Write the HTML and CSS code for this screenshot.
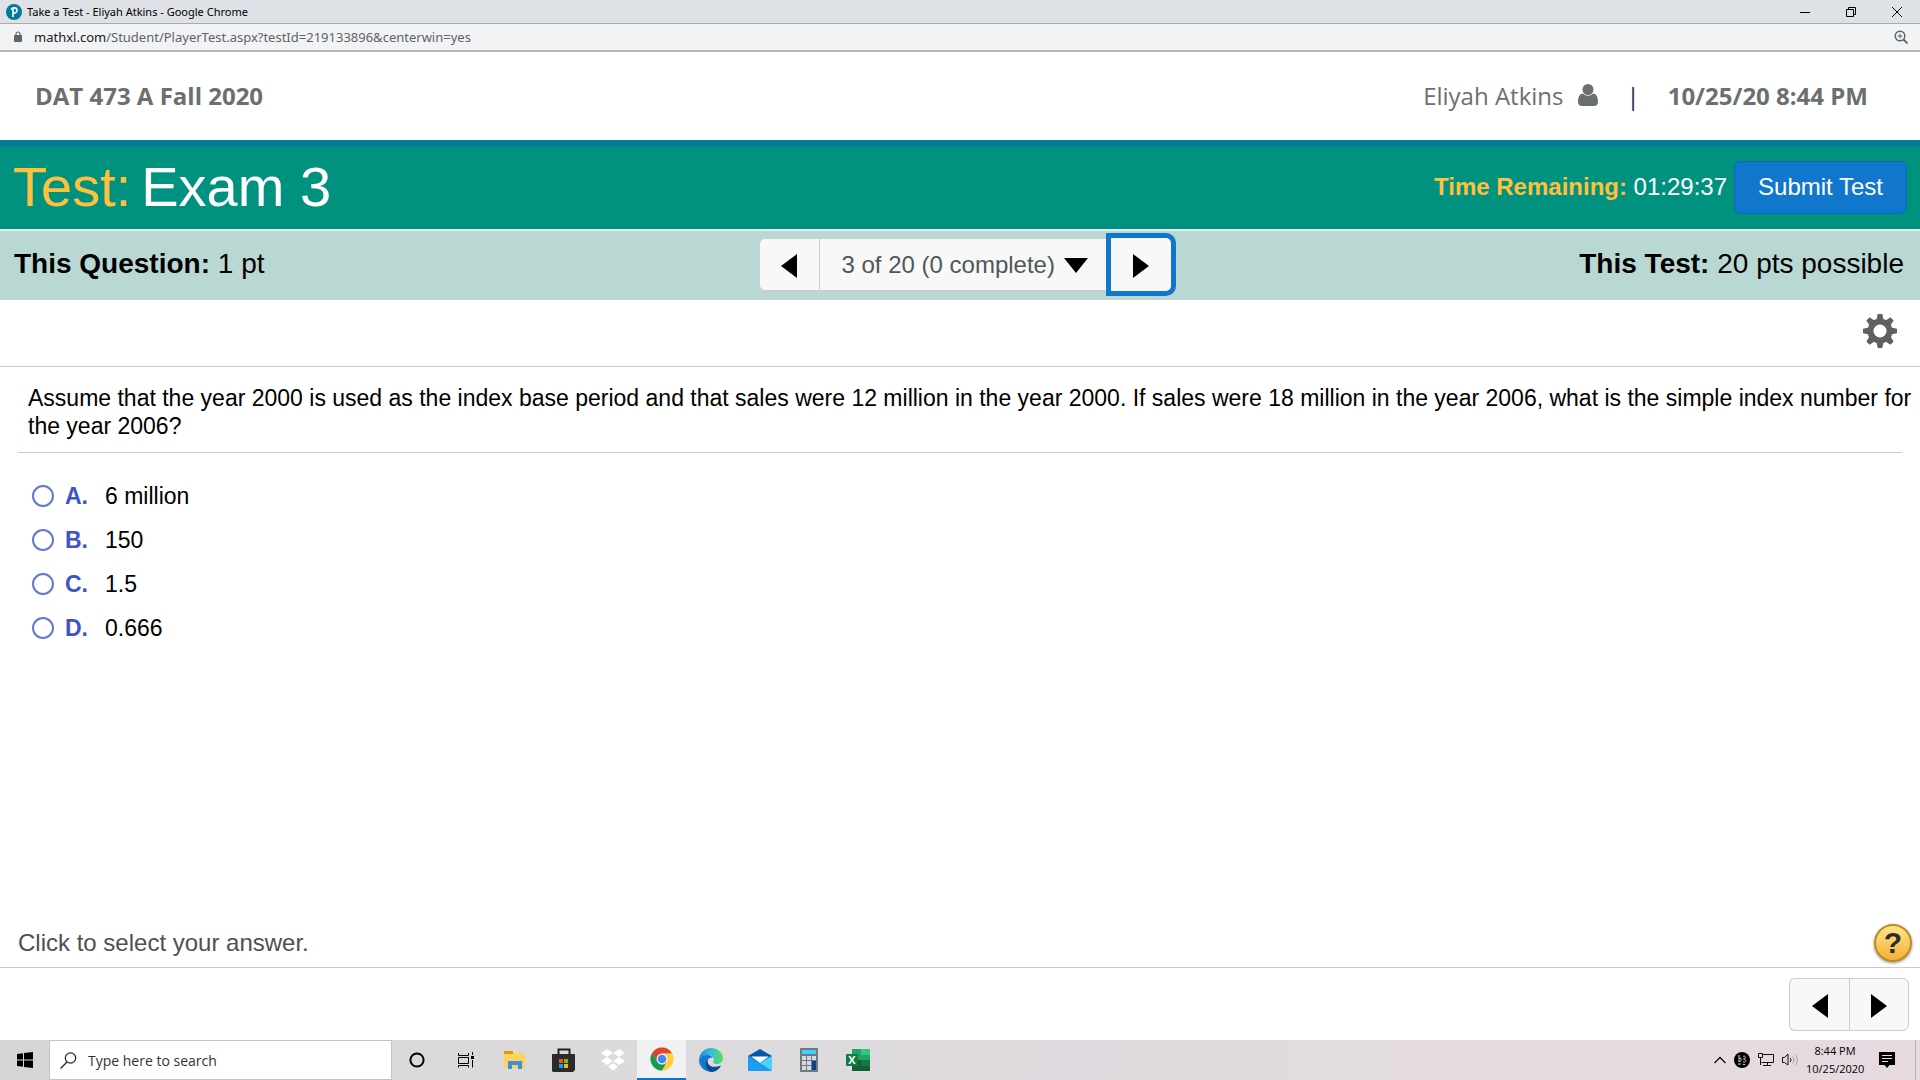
FILE: index.html
```html
<!DOCTYPE html>
<html lang="en">

<head>
    <meta charset="UTF-8">
    <meta name="viewport" content="width=device-width, initial-scale=1.0">
    <title>Take a Test - Eliyah Atkins</title>
    <link rel="stylesheet" href="styles.css">
</head>

<body>

    <!-- Window title -->
    <div class="titlebar">
        <svg class="favicon" width="16" height="16" viewBox="0 0 16 16">
            <circle cx="8" cy="8" r="8" fill="#047a9c" />
            <path d="M7 13V4.500M5 5.500C6 3.500 11 3 11 6.200C11 8.500 9 9.300 7.500 9" fill="none" stroke="#fff" stroke-width="1.600" />
        </svg>
        <span class="window-title">Take a Test - Eliyah Atkins - Google Chrome</span>
        <div class="window-buttons">
            <button aria-label="Minimize"><svg width="12" height="12"><path d="M1 6.500H11" stroke="#000" /></svg></button>
            <button aria-label="Restore"><svg width="12" height="12"><path d="M1.500 3.500H8.500V10.500H1.500ZM3.500 3.500V1.500H10.500V8.500H8.500" fill="none" stroke="#000" /></svg></button>
            <button aria-label="Close"><svg width="12" height="12"><path d="M1 1L11 11M11 1L1 11" stroke="#000" /></svg></button>
        </div>
    </div>

    <!-- Address bar -->
    <div class="addressbar">
        <svg width="8" height="12" viewBox="0 0 8 12">
            <rect y="4" width="8" height="7" rx="1" fill="#5f6368" />
            <path d="M2 5V3A2 2 0 0 1 6 3V5" fill="none" stroke="#5f6368" stroke-width="1.200" />
        </svg>
        <span class="url"><b>mathxl.com</b>/Student/PlayerTest.aspx?testId=219133896&amp;centerwin=yes</span>
        <button aria-label="Zoom">
            <svg width="14" height="14" viewBox="0 0 14 14" fill="none" stroke="#5f6368">
                <circle cx="6" cy="6" r="4.800" stroke-width="1.400" />
                <path d="M9.500 9.500L13.500 13.500" stroke-width="1.800" />
                <path d="M3.500 6H8.500M6 3.500V8.500" />
            </svg>
        </button>
    </div>

    <!-- Course header -->
    <header class="course">
        <span class="course-name">DAT 473 A Fall 2020</span>
        <span class="user">Eliyah Atkins</span>
        <svg class="user-icon" width="20" height="22" viewBox="0 0 20 22" fill="#6a7070">
            <circle cx="10" cy="5.500" r="5.500" />
            <path d="M5 9.500C1.500 10 0 13 0 18C0 20.500 1.500 22 4 22H16C18.500 22 20 20.500 20 18C20 13 18.500 10 15 9.500C12 12.500 8 12.500 5 9.500Z" />
        </svg>
        <span class="divider">|</span>
        <span class="date">10/25/20 8:44 PM</span>
    </header>

    <!-- Test title and timer -->
    <div class="test-bar">
        <h1><span class="gold">Test:</span> <span>Exam 3</span></h1>
        <div class="timer"><b class="gold">Time Remaining:</b> 01:29:37</div>
        <button class="submit">Submit Test</button>
    </div>

    <!-- Question bar -->
    <div class="question-bar">
        <div><b>This Question:</b> 1 pt</div>
        <div class="pager">
            <button class="prev" aria-label="Previous question"><svg width="16" height="24"><path d="M16 0V24L0 12Z" /></svg></button>
            <div class="jump">
                <select aria-label="Question">
                    <option>3 of 20 (0 complete)</option>
                </select>
                <svg width="24" height="15"><path d="M0 0H24L12 15Z" /></svg>
            </div>
            <button class="next selected" aria-label="Next question"><svg width="16" height="24"><path d="M0 0V24L16 12Z" /></svg></button>
        </div>
        <div class="points"><b>This Test:</b> 20 pts possible</div>
    </div>

    <div class="tools">
        <button aria-label="Settings">
            <svg width="34" height="34" viewBox="-17 -17 34 34">
                <g fill="#5f6062">
                    <circle r="12.500" />
                    <g id="teeth">
                        <path d="M-3.500 -11L-2.300 -17H2.300L3.500 -11ZM-3.500 11L-2.300 17H2.300L3.500 11Z" />
                        <path d="M-11 -3.500L-17 -2.300V2.300L-11 3.500ZM11 -3.500L17 -2.300V2.300L11 3.500Z" />
                    </g>
                    <use href="#teeth" transform="rotate(45)" />
                </g>
                <circle r="6.500" fill="#fff" />
            </svg>
        </button>
    </div>

    <!-- Question -->
    <main>
        <div class="question">
            <p>Assume that the year 2000 is used as the index base period and that sales were 12 million in the year 2000. If sales were 18 million in the year 2006, what is the simple index number for the year 2006?</p>
        </div>

        <div class="answers">
            <label><input type="radio" name="answer"><b>A.</b>6 million</label>
            <label><input type="radio" name="answer"><b>B.</b>150</label>
            <label><input type="radio" name="answer"><b>C.</b>1.5</label>
            <label><input type="radio" name="answer"><b>D.</b>0.666</label>
        </div>
    </main>

    <div class="hint">
        <span>Click to select your answer.</span>
        <button class="help" aria-label="Help">?</button>
    </div>

    <footer>
        <div class="pager">
            <button class="prev" aria-label="Previous"><svg width="16" height="24"><path d="M16 0V24L0 12Z" /></svg></button>
            <button class="next" aria-label="Next"><svg width="16" height="24"><path d="M0 0V24L16 12Z" /></svg></button>
        </div>
    </footer>

    <!-- Taskbar -->
    <div class="taskbar">
        <button aria-label="Start">
            <svg width="16" height="16"><path d="M0 2L6 1.200V7.500H0ZM7 1L16 0V7.500H7ZM0 8.500H6V14.800L0 14ZM7 8.500H16V16L7 15Z" /></svg>
        </button>
        <label class="search">
            <svg width="17" height="17" viewBox="0 0 17 17" fill="none" stroke="#222" stroke-width="1.200">
                <circle cx="10.500" cy="6" r="5.200" />
                <path d="M7 10L0.500 16.500" />
            </svg>
            <input type="text" aria-label="Search" placeholder="Type here to search">
        </label>
        <button aria-label="Cortana">
            <svg width="16" height="16"><circle cx="8" cy="8" r="6.600" fill="none" stroke="#000" stroke-width="2" /></svg>
        </button>
        <button aria-label="Task view">
            <svg width="16" height="16" fill="none" stroke="#000">
                <path d="M0.500 1V3.500H10.500V1M0.500 5.500H10.500V11.500H0.500ZM0.500 15.500V13.500H10.500V15.500M14.500 0V3M14.500 8V15.500" />
                <rect x="13" y="4" width="3" height="3" fill="#000" stroke="none" />
            </svg>
        </button>
        <button aria-label="File Explorer">
            <svg width="22" height="18">
                <path d="M0 0H8L10 2H21V17H0Z" fill="#ffd25e" />
                <path d="M0 0H9V3H0Z" fill="#dc9c10" />
                <path d="M4 10H18V18H14V14H8V18H4Z" fill="#3a93d8" />
            </svg>
        </button>
        <button aria-label="Microsoft Store">
            <svg width="24" height="24">
                <path d="M6.500 7V1.500H17.500V7" fill="none" stroke="#222" stroke-width="2" />
                <path d="M0 6H23V22L21 24H1L0 23Z" fill="#2b2b2b" />
                <path d="M7 11H11V15H7Z" fill="#f25022" />
                <path d="M12 11H16V15H12Z" fill="#7fba00" />
                <path d="M7 16H11V20H7Z" fill="#00a4ef" />
                <path d="M12 16H16V20H12Z" fill="#ffb900" />
            </svg>
        </button>
        <button aria-label="Dropbox">
            <svg width="24" height="22" fill="#fff">
                <path d="M6 0L12 4L6 8L0 4ZM18 0L24 4L18 8L12 4ZM6 8L12 12L6 16L0 12ZM18 8L24 12L18 16L12 12ZM12 14L17 17.500L12 21.500L7 17.500Z" />
            </svg>
        </button>
        <button class="running" aria-label="Google Chrome">
            <svg width="24" height="24" viewBox="-12 -12 24 24">
                <circle r="11.500" fill="#ffcd40" />
                <path d="M-9.960 -5.750A11.500 11.500 0 0 1 9.960 -5.750H0L-4.760 2.750Z" fill="#db4437" />
                <path d="M-9.960 -5.750L-4.760 2.750L0 5.500L4.760 2.750L0 11.500A11.500 11.500 0 0 1 -9.960 -5.750Z" fill="#0f9d58" />
                <circle r="5.500" fill="#f1f1f1" />
                <circle r="4.300" fill="#4285f4" />
            </svg>
        </button>
        <button aria-label="Microsoft Edge">
            <svg width="24" height="24" viewBox="0 0 24 24">
                <defs>
                    <linearGradient id="edge">
                        <stop offset="0" stop-color="#1b8fd9" />
                        <stop offset="0.5" stop-color="#2fc0de" />
                        <stop offset="1" stop-color="#62de4e" />
                    </linearGradient>
                </defs>
                <path d="M0 11C1 4 6 0 12 0C19 0 24 5 24 10C24 14 21 16 18 16C15 16 13.500 15 14.500 13C16 10 13 7 9 7C5 7 1 9 0 11Z" fill="url(#edge)" />
                <path d="M0 12C1 8 5 7 8 7C11 7 13 8 14 10C10 9 8 12 8 15C8 20 12 23 16 23C8 26 0 20 0 12Z" fill="#1578cf" />
                <path d="M9 11C7 17 13 21 22 17.500C20 22 16 24 12 24C6 21 5 14 9 11Z" fill="#114a92" />
            </svg>
        </button>
        <button aria-label="Mail">
            <svg width="24" height="22">
                <path d="M0 7L12 0L24 7L12 15Z" fill="#0358a7" />
                <path d="M3 7.500H21L12 14Z" fill="#fff" />
                <path d="M0 7L12 14L24 7V22H0Z" fill="#1a9df0" />
                <path d="M24 7V22L12 14Z" fill="#50d0fa" />
            </svg>
        </button>
        <button aria-label="Calculator">
            <svg width="18" height="24">
                <rect width="18" height="24" rx="1" fill="#6e7984" />
                <path d="M2 2H16V6H2Z" fill="#3ad3ff" />
                <path d="M2 8H6V12H2ZM7 8H11V12H7ZM12 8H16V12H12ZM2 13H6V17H2ZM7 13H11V17H7ZM2 18H6V22H2ZM7 18H11V22H7Z" fill="#d3dae0" />
                <path d="M12 13H16V22H12Z" fill="#10408c" />
            </svg>
        </button>
        <button aria-label="Excel">
            <svg width="24" height="22">
                <path d="M6 0H24V22H6Z" fill="#185c37" />
                <path d="M6 0H15V11H6Z" fill="#21a366" />
                <path d="M15 0H24V6H15Z" fill="#33c481" />
                <path d="M15 6H24V11H15Z" fill="#21a366" />
                <path d="M15 11H24V17H15Z" fill="#107c41" />
                <rect y="5" width="12" height="12" rx="1" fill="#107c41" />
                <text class="excel-letter" x="6" y="15" text-anchor="middle">X</text>
            </svg>
        </button>

        <div class="tray">
            <svg width="12" height="8"><path d="M0.500 7L6 1.500L11.500 7" fill="none" stroke="#111" stroke-width="1.300" /></svg>
            <svg width="16" height="16" viewBox="0 0 16 16">
                <circle cx="8" cy="8" r="8" />
                <path d="M5 3V10M5 6C8 5 8 10 5 9.500M9 4.500C12 3 12 7 9.500 7C13 7 12 11 9 10M4 12H7M9 12.500H11" fill="none" stroke="#d8d0d4" />
            </svg>
            <svg width="16" height="14" fill="none" stroke="#111">
                <path d="M5 1.500H15.500V9.500H3.500M9.500 9.500V12.500M5 12.500H13M0.500 0.500H4.500V4.500H0.500ZM2.500 4.500V12" />
            </svg>
            <svg width="16" height="14" fill="none" stroke="#111">
                <path d="M0.500 4.500H2.500L6 1V12L2.500 9.500H0.500Z" />
                <path d="M8 5C9.300 6 9.300 8 8 9" />
                <path d="M10.500 3.500C12.500 5 12.500 9 10.500 10.500M13 1.500C16 4 16 10 13 12.500" stroke="#a39da0" />
            </svg>
            <div class="clock">8:44 PM<br>10/25/2020</div>
            <svg class="notice" width="16" height="16">
                <path d="M0 0H16V13H10.500L8 16L5.500 13H0Z" />
                <path d="M3 3.500H13M3 6.500H13M3 9.500H9" stroke="#e5dce0" />
            </svg>
        </div>
    </div>

</body>

</html>
```
FILE: styles.css
```css
* {
    box-sizing: border-box;
}

body {
    font-family: "Liberation Sans", Arial, sans-serif;
    background-color: #fff;
    color: #000;
    margin: 0;
    display: flex;
    flex-direction: column;
    min-height: 100vh;
}

button {
    display: flex;
    align-items: center;
    justify-content: center;
    padding: 0;
    border: none;
    background: none;
    font-family: inherit;
    cursor: pointer;
}

svg {
    flex-shrink: 0;
}

/* Browser window */
.titlebar,
.addressbar {
    display: flex;
    align-items: center;
    font-family: "Noto Sans", "Segoe UI", sans-serif;
}

.titlebar {
    height: 24px;
    padding-left: 6px;
    background-color: #dee1e6;
    border-bottom: 1px solid #a9abaf;
    font-size: 11px;
}

.window-title {
    margin-left: 5px;
}

.window-buttons {
    display: flex;
    margin-left: auto;
}

.window-buttons button {
    width: 46px;
    height: 20px;
}

.addressbar {
    height: 28px;
    padding: 0 12px 0 14px;
    background-color: #f1f3f4;
    border-bottom: 2px solid #b6b8ba;
    font-size: 13px;
    color: #5f6368;
}

.url {
    margin: 0 auto 0 12px;
}

.url b {
    font-weight: normal;
    color: #202124;
}

/* Course header */
.course {
    display: flex;
    align-items: center;
    height: 88px;
    padding: 0 52px 2px 35px;
    font-family: "Open Sans", sans-serif;
    font-size: 24px;
    color: #6a7070;
}

.course-name,
.date {
    font-weight: bold;
}

.user {
    margin-left: auto;
}

.user-icon {
    margin-left: 15px;
}

.divider {
    margin: 0 28px;
    color: #1d2b4f;
}

/* Test title bar */
.test-bar {
    display: flex;
    align-items: center;
    height: 91px;
    padding: 0 13px 2px;
    background-color: #00927f;
    border-top: 7px solid #047a9c;
    border-bottom: 2px solid #dfeeee;
    color: #fff;
}

.test-bar h1 {
    display: flex;
    gap: 10px;
    margin: 0;
    padding-bottom: 2px;
    font-size: 56px;
    font-weight: normal;
}

.gold {
    color: #ffc13d;
}

.timer {
    margin: 0 7px 0 auto;
    font-size: 24px;
}

.submit {
    height: 53px;
    padding: 0 23px;
    background-color: #1177cc;
    border: 1px solid #0d67b3;
    border-radius: 6px;
    color: #fff;
    font-size: 24px;
}

/* Question bar */
.question-bar {
    display: grid;
    grid-template-columns: 1fr auto 1fr;
    align-items: center;
    height: 69px;
    padding: 0 16px 2px 14px;
    background-color: #bad8d3;
    border-bottom: 1px solid #c8cdd6;
    font-size: 28px;
}

.question-bar .pager {
    margin-left: 16px;
}

.points {
    text-align: right;
}

.pager {
    display: flex;
    align-items: center;
}

.pager button,
.jump {
    height: 53px;
    background-color: #f8f8f8;
    border: 1px solid #ccc;
}

.pager button {
    width: 60px;
    padding-top: 3px;
}

.pager .prev {
    border-right: none;
    border-radius: 6px 0 0 6px;
}

.pager .next {
    border-radius: 0 6px 6px 0;
}

.pager .selected {
    width: 70px;
    height: 63px;
    border: 5px solid #1177cc;
    border-radius: 0 10px 10px 0;
}

.jump {
    display: flex;
    align-items: center;
    position: relative;
    border-right: none;
}

.jump select {
    height: 100%;
    padding: 0 50px 0 22px;
    appearance: none;
    border: none;
    background: none;
    font-family: inherit;
    font-size: 24px;
    color: #505759;
}

/* arrow drawn over the drop-down */
.jump svg {
    position: absolute;
    top: 19px;
    right: 18px;
    pointer-events: none;
}

.tools {
    display: flex;
    align-items: center;
    justify-content: flex-end;
    height: 67px;
    padding: 0 23px 4px;
    border-bottom: 1px solid #c8cdda;
}

/* Question */
main {
    flex: 1;
    padding: 0 18px;
    font-size: 23px;
    line-height: 28px;
}

.question {
    padding: 17px 0 12px 10px;
    border-bottom: 1px solid #c8cdda;
}

/* the text runs a little past the rule below it */
.question p {
    margin: 0 -16px 0 0;
}

.answers {
    display: flex;
    flex-direction: column;
    gap: 16px;
    padding: 29px 14px;
}

.answers label {
    display: flex;
    align-items: center;
    align-self: flex-start;
}

.answers input {
    appearance: none;
    width: 22px;
    height: 22px;
    margin: 0 11px 0 0;
    border: 2px solid #6078d4;
    border-radius: 50%;
}

.answers b {
    width: 40px;
    color: #3b54cc;
}

.hint {
    display: flex;
    align-items: center;
    justify-content: space-between;
    height: 50px;
    padding: 0 8px 0 18px;
    border-bottom: 1px solid #c8cad2;
    font-size: 24px;
    color: #505050;
}

.help {
    width: 38px;
    height: 38px;
    background: linear-gradient(#ffe48a, #f3b135);
    border: 2px solid #b98b28;
    border-radius: 50%;
    box-shadow: 0 1px 3px #888;
    font-size: 30px;
    font-weight: bold;
    color: #2c2c2c;
}

footer {
    display: flex;
    align-items: center;
    justify-content: flex-end;
    height: 72px;
    padding: 0 11px;
}

/* Taskbar */
.taskbar {
    display: flex;
    height: 40px;
    background: linear-gradient(90deg, #d6d6d7, #dedbdf 45%, #e6dae0);
    font-family: "Open Sans", "Segoe UI", sans-serif;
}

.taskbar button {
    width: 49px;
}

.taskbar .running {
    background-color: #f1f1f2;
    border-bottom: 2px solid #0078d7;
}

.search {
    display: flex;
    align-items: center;
    width: 343px;
    padding-left: 10px;
    background-color: #fff;
    border: 1px solid #c4c4c6;
}

.search input {
    flex: 1;
    padding: 0 0 0 11px;
    border: none;
    font-family: inherit;
    font-size: 14px;
}

.search input::placeholder {
    color: #333;
}

.excel-letter {
    font-size: 11px;
    font-weight: bold;
    fill: #fff;
}

.tray {
    display: flex;
    align-items: center;
    gap: 8px;
    margin: 0 4px 0 auto;
    padding-right: 20px;
    border-right: 1px solid #b9b1b5;
}

.clock {
    width: 58px;
    font-size: 11px;
    line-height: 18px;
    text-align: center;
    white-space: nowrap;
}

.notice {
    margin-left: 7px;
}
```
